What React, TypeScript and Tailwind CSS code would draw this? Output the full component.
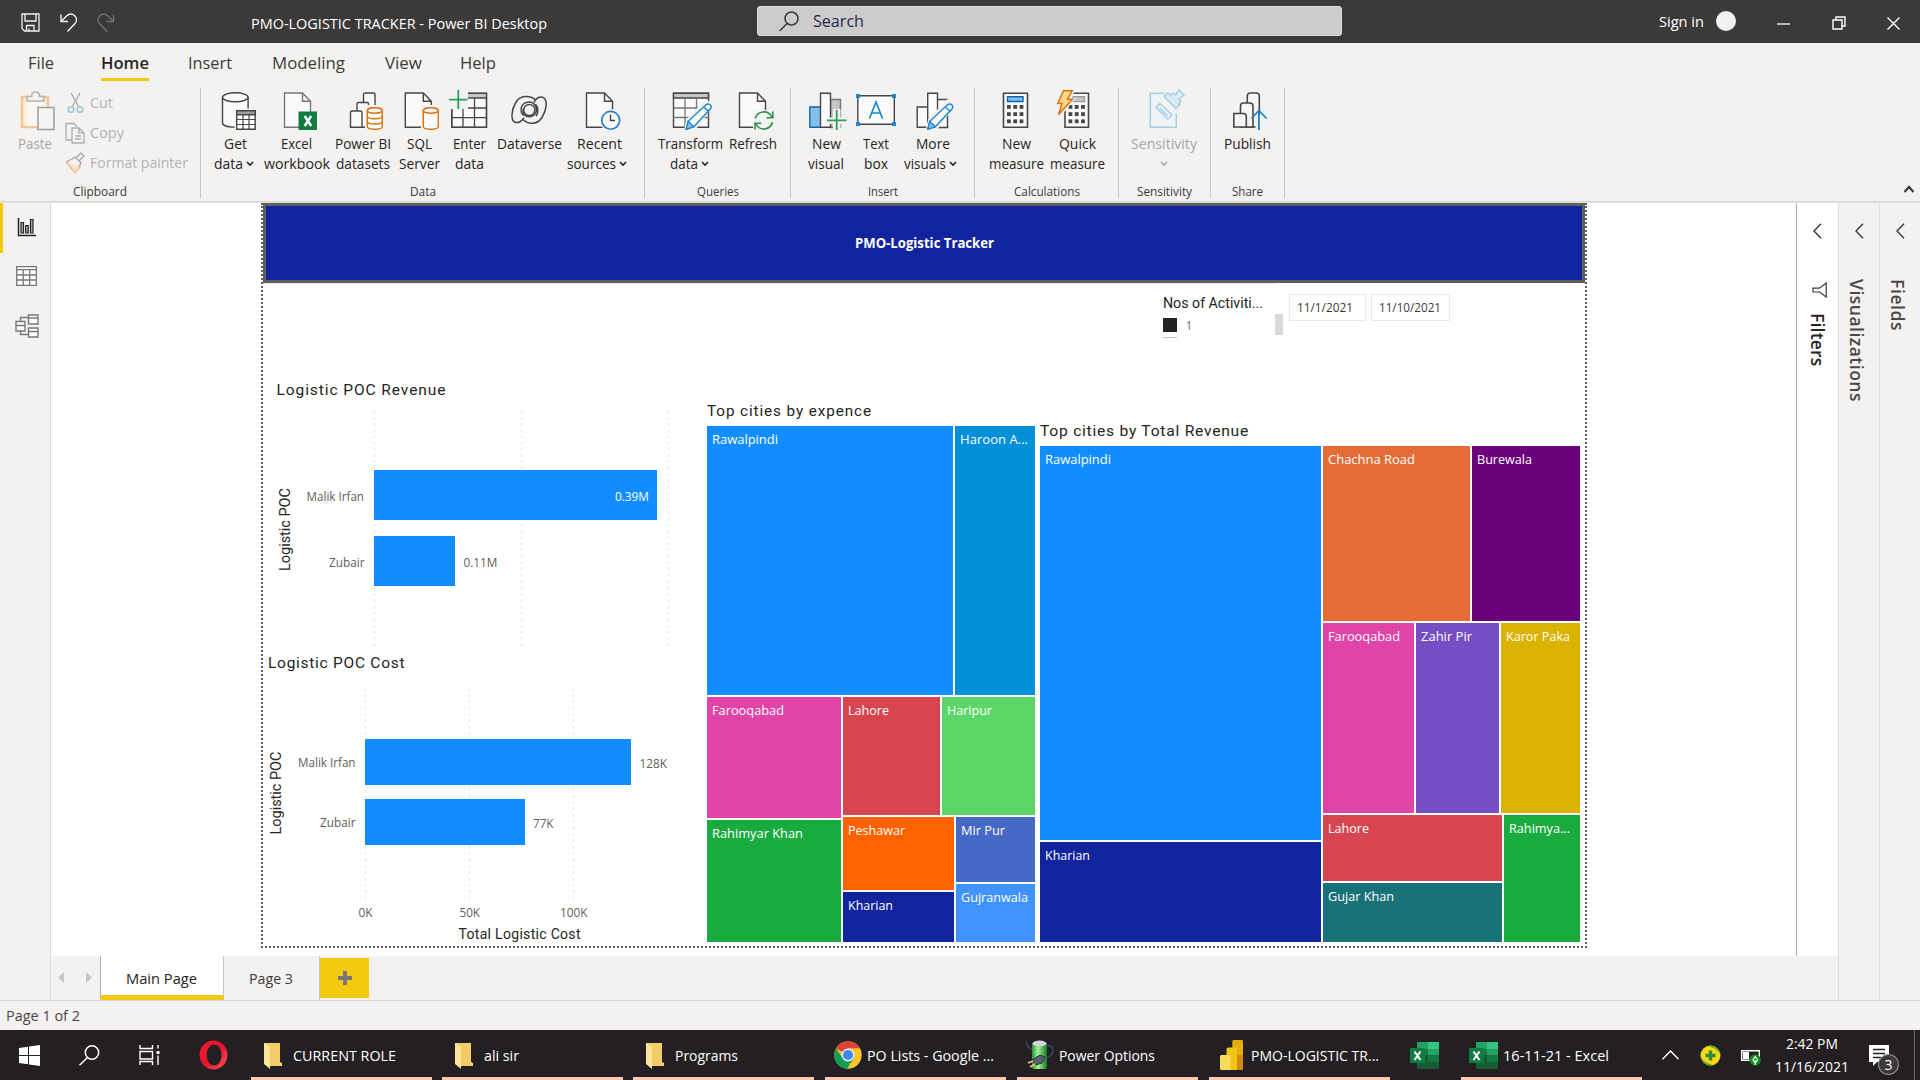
import React, { useLayoutEffect, useRef } from "react";

/** Single-line text squeezed or stretched to an exact width. */
function Fit({ w, className = "", children }: { w: number; className?: string; children: string }) {
  const ref = useRef<HTMLSpanElement>(null);
  useLayoutEffect(() => {
    const fit = () => {
      const el = ref.current;
      if (el && el.offsetWidth) el.style.transform = `scaleX(${(w / el.getBoundingClientRect().width) * currentScale(el)})`;
    };
    fit();
    document.fonts?.ready.then(fit);
  }, [w, children]);
  return (
    <span className={"block shrink-0 whitespace-nowrap " + className} style={{ width: w }}>
      <span ref={ref} className="inline-block origin-left">
        {children}
      </span>
    </span>
  );
}

function currentScale(el: HTMLElement) {
  const m = /scaleX\(([\d.]+)\)/.exec(el.style.transform);
  return m ? parseFloat(m[1]) : 1;
}

const Chev = ({ className = "" }: { className?: string }) => (
  <svg width="8" height="6" viewBox="0 0 8 6" className={className} fill="none" stroke="currentColor" strokeWidth="1.6">
    <path d="M1 1l3 3 3-3" />
  </svg>
);

const INK = "#484644";

/* ---------- ribbon icons (40 x 40) ---------- */
const Ico = ({ children }: { children: React.ReactNode }) => (
  <svg width="40" height="40" viewBox="0 0 40 40" className="shrink-0 overflow-visible" fill="none" stroke={INK} strokeWidth="1.4">
    {children}
  </svg>
);
const Doc = ({ x, c = INK }: { x: number; c?: string }) => (
  <path d={`M${x} 3h18l8 8.3v26h-26z M${x + 18} 3v8.3h8`} fill="#fafafa" stroke={c} />
);
const OrangeCyl = ({ rings = false }: { rings?: boolean }) => (
  <g stroke="#d9730d" strokeWidth="1.4">
    <path d="M22 15h20v26h-20z" fill="#f3f2f1" stroke="none" />
    <path d="M24.3 20.5v16c0 3.6 15 3.6 15 0v-16" fill="#fafafa" />
    <ellipse cx="31.8" cy="20.5" rx="7.5" ry="2.7" fill="#fafafa" />
    {rings && <path d="M24.3 26c0 3.6 15 3.6 15 0M24.3 31.3c0 3.6 15 3.6 15 0" />}
  </g>
);
const Pencil = ({ x }: { x: number }) => (
  <g transform={`translate(${x} 0)`}>
    <path d="M-2 41l3-12L20 9l8 6L12 37l-5 5z" fill="#f3f2f1" stroke="none" />
    <path d="M0.500 39.300l2-8L20.500 14.600c3-2 6 1.300 4.500 4L8 36.800z" fill="#fafafa" stroke="#1e88cf" />
    <path d="M0.500 39.300l2-8 5.500 5.500z" fill="#83beec" stroke="#1e88cf" />
    <path d="M18 17l5 4.500" stroke="#1e88cf" />
  </g>
);
const Dots = ({ x, c = INK }: { x: number; c?: string }) => (
  <g fill={c} stroke="none">
    {[15, 22.2, 29.4].map((y) =>
      [0, 6.3, 12.6].map((d) => <rect key={`${y}-${d}`} x={x + d} y={y} width="3.8" height="3.8" />)
    )}
  </g>
);

const GetData = () => (
  <Ico>
    <path d="M7.500 7v26c0 5.500 25.600 5.500 25.600 0V7" fill="#fafafa" />
    <ellipse cx="20.300" cy="7.300" rx="12.800" ry="4.500" fill="#fafafa" />
    <path d="M19.500 18.500H42V41H19.500z" fill="#f3f2f1" stroke="none" />
    <path d="M21.700 20.700h18.500v18.500H21.700z" fill="#fff" />
    <path d="M21.700 20.700h18.500v4H21.700z" fill="#a19f9d" />
    <path d="M28 24.500v15M34 24.500v15M21.700 29.500h18.500M21.700 34.500h18.500" strokeWidth="1.200" />
  </Ico>
);
const Excel = () => (
  <Ico>
    <Doc x={7.500} c="#797775" />
    <rect x="21.500" y="21.500" width="18.500" height="18.500" fill="#107c41" stroke="none" />
    <path d="M27.700 26l6.500 10M34.200 26l-6.500 10" stroke="#fff" strokeWidth="2.400" />
  </Ico>
);
const Datasets = () => (
  <Ico>
    <path d="M20.500 37.300V4.500q0-1.500 1.500-1.500h8.500q1.500 0 1.500 1.500v32.800z" fill="#fafafa" />
    <path d="M14 37.300V14q0-1.500 1.500-1.500H24q1.500 0 1.500 1.500v23.300z" fill="#fafafa" />
    <path d="M7.500 37.300V22.500q0-1.500 1.500-1.500h8.500q1.500 0 1.500 1.500v14.800z" fill="#fafafa" />
    <OrangeCyl rings />
  </Ico>
);
const Sql = () => (
  <Ico>
    <Doc x={6.300} />
    <OrangeCyl />
  </Ico>
);
const Enter = () => (
  <Ico>
    <path d="M1.800 3.300h34.700v34H1.800z" fill="#fafafa" />
    <path d="M12 3.300h24.500V8H12z" fill="#c8c6c4" stroke="none" />
    <path d="M1.800 3.300h34.700v34H1.800zM13 14v23M24.500 8v29M12 8h24M14 18h22.500M1.800 27.700h34.700" strokeWidth="1.300" />
    <path d="M-1 1h19v18H-1z" fill="#f3f2f1" stroke="none" />
    <path d="M8.300 0v19M-1 9.600h18.500" stroke="#2f9e58" strokeWidth="1.800" />
  </Ico>
);
const Dataverse = () => (
  <Ico>
    <g strokeWidth="1.500">
      <path d="M13.500 25.500c-4.300-4.500-3-13 5.500-13.500 4-.2 8 3.300 7.500 8.500-.5 4-4 6.500-7.500 6.300-4-.2-6.500-3.500-6-7.500" />
      <circle cx="19.300" cy="20" r="5.600" />
      <path d="M26 10.500C20 4.500 10 5.500 6 12 1.500 19.500.500 30 4.500 32c3.500 1.800 8-1 9.500-4.500" />
      <path d="M13 29.500c6 6 15 4.500 19-2 4.500-7.500 6-17 1.500-19.800-3.500-2-8 .5-9.500 4.800" />
      <path d="M25.500 14c3 3.500 3 9 .5 12" />
    </g>
  </Ico>
);
const Recent = () => (
  <Ico>
    <Doc x={8.500} />
    <circle cx="32.700" cy="30.300" r="11" fill="#f3f2f1" stroke="none" />
    <circle cx="32.700" cy="30.300" r="8.900" fill="#fafafa" stroke="#1e7fc2" strokeWidth="1.600" />
    <path d="M32.500 24.500v6h4.500" />
  </Ico>
);
const Transform = () => (
  <Ico>
    <path d="M3.500 3.300h35v34h-35z" fill="#fafafa" />
    <path d="M3.500 3.300h35V8h-35z" fill="#c8c6c4" />
    <path d="M15 8v29M26.500 8v29M3.500 18h35M3.500 27.500h35" stroke="#797775" strokeWidth="1.300" />
    <Pencil x={15.700} />
  </Ico>
);
const Refresh = () => (
  <Ico>
    <Doc x={6.500} />
    <path d="M20 20h22v22H20z" fill="#f3f2f1" stroke="none" />
    <g stroke="#2f8f4e" strokeWidth="1.600">
      <path d="M22.300 28.500a8.800 8.800 0 0 1 16.500-1.500M39.500 32a8.800 8.800 0 0 1-16.500 2" />
      <path d="M39.800 21.500v6.300h-6.300M22 39.500v-6.300h6.300" />
    </g>
  </Ico>
);
const NewVisual = () => (
  <Ico>
    <path d="M24.500 9.500h10v28h-10z" fill="#c8c6c4" stroke="#797775" />
    <path d="M3.800 17h11v20.300h-11z" fill="#83beec" stroke="#1166a8" />
    <path d="M14.500 3.200h10v34h-10z" fill="#fafafa" />
    <path d="M27 19h7.500v8.500H42v6.500h-7.500v6H27v-6h-5.500v-6.500H27z" fill="#f3f2f1" stroke="none" />
    <path d="M30.700 20v20M21 30.400h19.500" stroke="#2f9e58" strokeWidth="1.800" />
  </Ico>
);
const TextBox = () => (
  <Ico>
    <path d="M1.800 5.800h36.500v28.500H1.800z" fill="#fafafa" />
    <path d="M13.500 28.500L20 12l6.500 16.500M16 23h8" stroke="#1e88cf" strokeWidth="1.700" />
    <g fill="#1e88cf" stroke="none">
      <rect x="0" y="4" width="4" height="4" />
      <rect x="36" y="4" width="4" height="4" />
      <rect x="0" y="32" width="4" height="4" />
      <rect x="36" y="32" width="4" height="4" />
    </g>
  </Ico>
);
const MoreVisuals = () => (
  <Ico>
    <path d="M26.500 9.500h10v28h-10zM6.200 17h10.500v20.300H6.200zM16.700 3.200h9.800v34h-9.800z" fill="#fafafa" />
    <Pencil x={16.300} />
  </Ico>
);
const NewMeasure = () => (
  <Ico>
    <path d="M7.500 3.200h24v34h-24z" fill="#fafafa" strokeWidth="1.600" />
    <path d="M11.500 6.800h15.500v4.700H11.500z" fill="#83beec" stroke="#1166a8" />
    <Dots x={11} />
  </Ico>
);
const QuickMeasure = () => (
  <Ico>
    <path d="M8 3.200h23.500v34H8z" fill="#fafafa" strokeWidth="1.600" />
    <path d="M15 6.800h12.500v4.700H15z" fill="#c8c6c4" stroke="#a19f9d" />
    <Dots x={11.500} />
    <path d="M4 -1h14l-3 9h4L3 27l-5-1z" fill="#f3f2f1" stroke="none" />
    <path d="M6.500 .7h8.700l-4.700 8.500h5L1.500 24.500l3.500-11H.8z" fill="#ffd88c" stroke="#d9730d" strokeWidth="1.500" />
  </Ico>
);
const Sensitivity = () => (
  <Ico>
    <g stroke="#a5cde6" strokeWidth="1.500">
      <path d="M6.300 3.300h26v34h-26z" fill="#f0f3f5" />
      <path d="M12 17.500l4-4 12 11.500-4 4zM15.500 18l8 7.500" />
      <path d="M17 7l8-8h15l4 8-12 17z" fill="#f3f2f1" stroke="none" />
      <path d="M20 5.500l3.800-3.800 12 12L32 17.500z" fill="#dcebf4" transform="translate(0 1)" />
      <path d="M26 5.500l3-2.500 2.500 2 3.500-5 5 5-5 4 2 2.500-2.500 3" fill="#dcebf4" />
    </g>
  </Ico>
);
const Publish = () => (
  <Ico>
    <g strokeWidth="1.600">
      <path d="M20.300 37V6q0-3 3-3h6q3 0 3 3v31z" fill="#f6f5f4" />
      <path d="M13.500 37V16q0-3 3-3h6.500q3 0 3 3v21z" fill="#f6f5f4" />
      <path d="M6.800 37V23.500h9.500q3 0 3 3V37z" fill="#f6f5f4" />
      <path d="M28.500 25h7v16h-7z" fill="#f3f2f1" stroke="none" />
      <path d="M31.900 40V20.500M24.500 28.500l7.400-8 7.600 8" stroke="#1e7fc2" strokeWidth="1.800" />
    </g>
  </Ico>
);

/* ---------- ribbon ---------- */
type Line = [string, number];
function Item({ w, icon, a, ax = "", b, bx = "", chev, chevOnly, dim }: { w: string; icon: React.ReactNode; a: Line; ax?: string; b?: Line; bx?: string; chev?: boolean; chevOnly?: boolean; dim?: boolean }) {
  return (
    <div className={`flex h-[86px] shrink-0 flex-col items-center text-[14.500px] leading-5 ${w} ${dim ? "text-[#a8a6a4]" : "text-[#252423]"}`}>
      {icon}
      <div className={"mt-1 " + ax}>
        <Fit w={a[1]}>{a[0]}</Fit>
      </div>
      {b && (
        <div className={"flex items-center gap-[3px] " + bx}>
          <Fit w={b[1]}>{b[0]}</Fit>
          {chev && <Chev />}
        </div>
      )}
      {chevOnly && <Chev className="mt-[7px]" />}
    </div>
  );
}
function Group({ w, label, lw, children }: { w: string; label: string; lw: number; children: React.ReactNode }) {
  return (
    <div className={`flex h-[110px] shrink-0 flex-col border-r border-[#c8c6c4] ${w}`}>
      <div className="flex h-[95px] pt-[2px]">{children}</div>
      <div className="flex h-[15px] justify-center text-[12.500px] leading-[17px] text-[#3b3a39]">
        <Fit w={lw}>{label}</Fit>
      </div>
    </div>
  );
}

function Ribbon() {
  return (
    <div className="h-[158px] bg-[#f3f2f1]">
      <nav className="flex h-[45px] text-[17px] leading-[39px] text-[#3b3a39]">
        <Fit w={26} className="ml-[28px]">File</Fit>
        <div className="ml-[47px] h-[38px] w-[48px] border-b-[3px] border-[#f2c811] font-semibold text-[#252423]">
          <Fit w={48}>Home</Fit>
        </div>
        <Fit w={44} className="ml-[39px]">Insert</Fit>
        <Fit w={73} className="ml-[40px]">Modeling</Fit>
        <Fit w={37} className="ml-[40px]">View</Fit>
        <Fit w={36} className="ml-[38px]">Help</Fit>
      </nav>
      <div className="flex">
        <Group w="w-[201px]" label="Clipboard" lw={54}>
          <div className="ml-[15px] w-[40px] text-[14.500px] leading-5 text-[#a8a6a4]">
            <Ico>
              <g strokeWidth="1.500">
                <path d="M7 7h26v30H7z" fill="#fdeed6" stroke="#eec89a" strokeWidth="2.500" />
                <path d="M12 12h17v24H12z" fill="#f8f7f6" stroke="none" />
                <path d="M12 11V6.500h4.500c0-6 8-6 8 0H29V11z" fill="#f3f2f1" stroke="#b5b3b1" />
                <path d="M23 17.500h16v22H23z" fill="#f6f5f4" stroke="#a19f9d" />
              </g>
            </Ico>
            <div className="mt-1 pl-[3px]">
              <Fit w={34}>Paste</Fit>
            </div>
          </div>
          <div className="ml-[10px] flex flex-col text-[14.500px] leading-[30px] text-[#b5b3b1]">
            <div className="-mt-[2px] flex h-[30px] items-center gap-[5px]">
              <svg width="20" height="22" viewBox="0 0 20 22" className="translate-x-px" fill="none" stroke="#a8a6a4" strokeWidth="1.300">
                <path d="M5 1l8 14M14 1L6 15" />
                <circle cx="5" cy="17.500" r="2.800" stroke="#9cc3de" strokeWidth="1.500" />
                <circle cx="14" cy="17.500" r="2.800" stroke="#9cc3de" strokeWidth="1.500" />
              </svg>
              <Fit w={23}>Cut</Fit>
            </div>
            <div className="flex h-[30px] items-center gap-[5px]">
              <svg width="20" height="22" viewBox="0 0 20 22" fill="none" stroke="#b0aeac" strokeWidth="1.300">
                <path d="M7 18H1V1.500h8l3 3" />
                <path d="M7 6h7l5 5v10H7zM14 6v5h5M10 14h6M10 17h6" />
              </svg>
              <Fit w={34}>Copy</Fit>
            </div>
            <div className="flex h-[30px] items-center gap-[5px]">
              <svg width="20" height="22" viewBox="0 0 20 22" fill="none" strokeWidth="1.300">
                <path d="M2 11l7-2 6 6-5 6z" fill="#fae3c5" stroke="#e9bd8d" />
                <path d="M1 10l6-3 3-2 6 6-2 4M11 6l5-5 3 3-5 5" fill="#f3f2f1" stroke="#a8a6a4" />
              </svg>
              <Fit w={98}>Format painter</Fit>
            </div>
          </div>
        </Group>
        <Group w="w-[444px]" label="Data" lw={26}>
          <Item w="ml-[11px] w-[46px]" icon={<GetData />} a={["Get", 23]} b={["data", 29]} bx="-ml-[2px]" chev />
          <Item w="w-[78px]" icon={<Excel />} a={["Excel", 31]} ax="-ml-[2px]" b={["workbook", 66]} />
          <Item w="w-[54px]" icon={<Datasets />} a={["Power BI", 56]} b={["datasets", 54]} />
          <Item w="w-[58px]" icon={<Sql />} a={["SQL", 25]} b={["Server", 41]} />
          <Item w="w-[44px]" icon={<Enter />} a={["Enter", 33]} ax="-ml-[2px]" b={["data", 29]} bx="-ml-[2px]" />
          <Item w="w-[76px]" icon={<Dataverse />} a={["Dataverse", 65]} ax="-ml-px" />
          <Item w="w-[60px]" icon={<Recent />} a={["Recent", 45]} ax="ml-[2px]" b={["sources", 49]} bx="-ml-[3px]" chev />
        </Group>
        <Group w="w-[146px]" label="Queries" lw={42}>
          <Item w="ml-[11px] w-[68px]" icon={<Transform />} a={["Transform", 65]} b={["data", 28]} bx="-ml-[2px]" chev />
          <Item w="w-[58px]" icon={<Refresh />} a={["Refresh", 48]} />
        </Group>
        <Group w="w-[184px]" label="Insert" lw={30}>
          <Item w="ml-[13px] w-[44px]" icon={<NewVisual />} a={["New", 29]} b={["visual", 36]} />
          <Item w="w-[56px]" icon={<TextBox />} a={["Text", 26]} b={["box", 24]} />
          <Item w="w-[54px]" icon={<MoreVisuals />} a={["More", 34]} ax="ml-[4px]" b={["visuals", 42]} bx="-ml-px" chev />
        </Group>
        <Group w="w-[144px]" label="Calculations" lw={66}>
          <Item w="ml-[13px] w-[56px]" icon={<NewMeasure />} a={["New", 29]} b={["measure", 55]} />
          <Item w="ml-[4px] w-[58px]" icon={<QuickMeasure />} a={["Quick", 37]} b={["measure", 55]} />
        </Group>
        <Group w="w-[92px]" label="Sensitivity" lw={55}>
          <Item w="ml-[11px] w-[68px]" icon={<Sensitivity />} a={["Sensitivity", 66]} chevOnly dim />
        </Group>
        <Group w="w-[74px]" label="Share" lw={31}>
          <Item w="ml-[11px] w-[50px]" icon={<Publish />} a={["Publish", 47]} />
        </Group>
        <svg width="12" height="8" viewBox="0 0 12 8" className="mt-[97px] mr-[5px] ml-auto" fill="none" stroke="#3b3a39" strokeWidth="2.200">
          <path d="M1.500 7L6 2l4.500 5" />
        </svg>
      </div>
    </div>
  );
}

function TitleBar() {
  return (
    <header className="flex h-[43px] shrink-0 items-start bg-[#3b3a39] text-white">
      <svg width="19" height="19" viewBox="0 0 19 19" className="mt-[13px] ml-[21px]" fill="none" stroke="#f3f2f1" strokeWidth="1.300">
        <path d="M1 1h17v17H3.500L1 15.500zM4 1v7h11V1M5.500 18v-5.500h7.500V18M8 15.500V18" />
      </svg>
      <svg width="18" height="19" viewBox="0 0 18 19" className="mt-[13px] ml-[20px]" fill="none" stroke="#f3f2f1" strokeWidth="1.400">
        <path d="M1 1.500v7h7M1.500 8l5-5c6-5 13 2 8.500 7.500L7.500 18.500" />
      </svg>
      <svg width="18" height="19" viewBox="0 0 18 19" className="mt-[13px] ml-[19px]" fill="none" stroke="#74726f" strokeWidth="1.300">
        <path d="M16.500 1.500v7h-7M16 8l-5-5C5 -2 -2 5 2.500 10.500L10 18.500" />
      </svg>
      <Fit w={296} className="ml-[136px] text-[14.500px] leading-[47px]">PMO-LOGISTIC TRACKER - Power BI Desktop</Fit>
      <div className="mt-[6px] ml-[210px] flex h-[30px] w-[585px] items-center rounded-[3px] border border-[#dddcdb] bg-[#cdccca] pl-[21px]">
        <svg width="20" height="21" viewBox="0 0 20 21" fill="none" stroke="#3b3a39" strokeWidth="1.500">
          <circle cx="12.500" cy="7.500" r="6.500" />
          <path d="M8 12.500L.7 20" />
        </svg>
        <Fit w={51} className="ml-[14px] text-[16.500px] leading-7 text-[#1f2a4d]">Search</Fit>
      </div>
      <Fit w={45} className="ml-[317px] text-[14.500px] leading-[43px]">Sign in</Fit>
      <div className="mt-[11px] ml-[12px] size-[20px] rounded-full bg-[#f3f2f1]" />
      <svg width="13" height="2" className="mt-[23px] ml-[41px]">
        <path d="M0 1h13" stroke="#fff" strokeWidth="1.300" />
      </svg>
      <svg width="14" height="14" viewBox="0 0 14 14" className="mt-[16px] ml-[42px]" fill="none" stroke="#fff" strokeWidth="1.400">
        <path d="M1 4h9v9H1zM4 4V1h9v9h-3" />
      </svg>
      <svg width="13" height="13" viewBox="0 0 13 13" className="mt-[17px] ml-[41px]" fill="none" stroke="#fff" strokeWidth="1.400">
        <path d="M.5 .5l12 12M12.500 .5l-12 12" />
      </svg>
    </header>
  );
}

function ViewBar() {
  return (
    <aside className="flex w-[51px] shrink-0 flex-col border-r border-[#dcdbda] bg-[#f3f2f1]">
      <div className="h-[50px] border-l-[3px] border-[#f2c811] pt-[15px] pl-[14px]">
        <svg width="19" height="19" viewBox="0 0 19 19" fill="#b3b1af" stroke="#252423" strokeWidth="1.200">
          <path d="M1.500 0v17.500H19" fill="none" strokeWidth="1.500" />
          <path d="M4 4.500h2.500v10.500H4zM8.700 7.500h2.500V15H8.700zM13.500 1.500H16V15h-2.500z" />
        </svg>
      </div>
      <svg width="21" height="20" viewBox="0 0 21 20" className="mt-[13px] ml-[16px]" fill="#fff" stroke="#797775" strokeWidth="1.300">
        <path d="M.7 .7h19.600v18.600H.7zM.7 3.700h19.600M7.200 3.700v15.600M13.700 3.700v15.600M.7 9h19.600M.7 14h19.600" />
      </svg>
      <svg width="24" height="24" viewBox="0 0 24 24" className="mt-[28px] ml-[15px]" fill="#fff" stroke="#797775" strokeWidth="1.400">
        <path d="M5.500 7V3.500H14M5.500 17v3.500H14" fill="none" />
        <path d="M1 7.500h9V17H1zM1 11.500h9M13.500 1H23v9h-9.500zM13.500 4H23M13.500 14H23v9h-9.500zM13.500 17.500H23" />
      </svg>
    </aside>
  );
}

function ChartText({ x, y, w, s = 12.5, fill = "#605e5c", spaced, children, rotate }: { x: number; y: number; w: number; s?: number; fill?: string; spaced?: boolean; children: string; rotate?: boolean }) {
  return (
    <text x={rotate ? 0 : x} y={rotate ? 0 : y} fontSize={s} fill={fill} textLength={w} lengthAdjust={spaced ? "spacing" : "spacingAndGlyphs"} transform={rotate ? `translate(${x} ${y}) rotate(-90)` : undefined}>
      {children}
    </text>
  );
}
const DIN = "Roboto, sans-serif";

/* Both chart viewBoxes use window coordinates. */
function RevenueChart() {
  return (
    <svg width="415" height="290" viewBox="267 375 415 290" className="absolute top-[172px] left-[4px]">
      {[374.5, 521.5, 668.5].map((x) => (
        <path key={x} d={`M${x} 411V648`} stroke="#d6d6d6" strokeWidth="1.200" strokeDasharray="1.300 5" />
      ))}
      <rect x="374" y="470" width="283" height="50" fill="#118dff" />
      <rect x="374" y="536" width="81" height="50" fill="#118dff" />
      <g fontFamily={DIN}>
        <ChartText x={276.500} y={395} w={169} s={15.500} fill="#252423" spaced>Logistic POC Revenue</ChartText>
        <ChartText x={290} y={571} w={83} s={14.500} fill="#252423" spaced rotate>Logistic POC</ChartText>
      </g>
      <ChartText x={306.500} y={501} w={57.500}>Malik Irfan</ChartText>
      <ChartText x={329} y={566.500} w={35.500}>Zubair</ChartText>
      <ChartText x={615} y={501} w={34} fill="#fff">0.39M</ChartText>
      <ChartText x={463.500} y={567} w={34}>0.11M</ChartText>
    </svg>
  );
}
function CostChart() {
  return (
    <svg width="430" height="295" viewBox="267 649 430 295" className="absolute top-[446px] left-[4px]">
      {[365.5, 469.5, 573.5].map((x) => (
        <path key={x} d={`M${x} 689V902`} stroke="#d6d6d6" strokeWidth="1.200" strokeDasharray="1.300 5" />
      ))}
      <rect x="365" y="739" width="266" height="46" fill="#118dff" />
      <rect x="365" y="799" width="160" height="46" fill="#118dff" />
      <g fontFamily={DIN}>
        <ChartText x={268} y={668} w={136.500} s={15.500} fill="#252423" spaced>Logistic POC Cost</ChartText>
        <ChartText x={281} y={834.500} w={83} s={14.500} fill="#252423" spaced rotate>Logistic POC</ChartText>
        <ChartText x={458.500} y={938.500} w={122} s={14} fill="#252423" spaced>Total Logistic Cost</ChartText>
      </g>
      <ChartText x={298} y={767} w={57.500}>Malik Irfan</ChartText>
      <ChartText x={320} y={827} w={35.500}>Zubair</ChartText>
      <ChartText x={639.500} y={767.500} w={27.500}>128K</ChartText>
      <ChartText x={533} y={828} w={20.500}>77K</ChartText>
      <ChartText x={358.500} y={917} w={14}>0K</ChartText>
      <ChartText x={459.500} y={917} w={20.500}>50K</ChartText>
      <ChartText x={560} y={917} w={27.500}>100K</ChartText>
    </svg>
  );
}

function Tile({ className, w, children }: { className: string; w: number; children: string }) {
  return (
    <div className={"overflow-hidden pt-[4px] pl-[5px] text-[13px] leading-[18px] text-white " + className}>
      <Fit w={w}>{children}</Fit>
    </div>
  );
}

function ExpenseTreemap() {
  return (
    <section className="absolute top-[198px] left-[444px] w-[328px]">
      <Fit w={165} className="h-[25px] font-['Roboto'] text-[15px] leading-[21px] tracking-[0.900px] text-[#252423]">Top cities by expence</Fit>
      <div className="flex h-[516px] flex-col gap-[2px]">
        <div className="flex h-[269px] shrink-0 gap-[2px]">
          <Tile className="w-[246px] bg-[#118dff]" w={66}>Rawalpindi</Tile>
          <Tile className="flex-1 bg-[#0090d9]" w={68}>Haroon A...</Tile>
        </div>
        <div className="flex flex-1 gap-[2px]">
          <div className="flex w-[134px] flex-col gap-[2px]">
            <Tile className="h-[121px] bg-[#e044a7]" w={72}>Farooqabad</Tile>
            <Tile className="flex-1 bg-[#1aab40]" w={91}>Rahimyar Khan</Tile>
          </div>
          <div className="flex flex-1 flex-col gap-[2px]">
            <div className="flex h-[118px] gap-[2px]">
              <Tile className="w-[97px] bg-[#d64550]" w={41}>Lahore</Tile>
              <Tile className="flex-1 bg-[#5cd667]" w={45}>Haripur</Tile>
            </div>
            <div className="flex flex-1 gap-[2px]">
              <div className="flex w-[111px] flex-col gap-[2px]">
                <Tile className="h-[73px] bg-[#ff6200]" w={57}>Peshawar</Tile>
                <Tile className="flex-1 bg-[#12239e]" w={45}>Kharian</Tile>
              </div>
              <div className="flex flex-1 flex-col gap-[2px]">
                <Tile className="h-[65px] bg-[#4668c5]" w={44}>Mir Pur</Tile>
                <Tile className="flex-1 bg-[#4092ff]" w={67}>Gujranwala</Tile>
              </div>
            </div>
          </div>
        </div>
      </div>
    </section>
  );
}

function RevenueTreemap() {
  return (
    <section className="absolute top-[218px] left-[777px] w-[540px]">
      <Fit w={209} className="h-[25px] font-['Roboto'] text-[15px] leading-[21px] tracking-[0.700px] text-[#252423]">Top cities by Total Revenue</Fit>
      <div className="flex h-[496px] gap-[2px]">
        <div className="flex w-[281px] flex-col gap-[2px]">
          <Tile className="h-[394px] bg-[#118dff]" w={66}>Rawalpindi</Tile>
          <Tile className="flex-1 bg-[#12239e]" w={45}>Kharian</Tile>
        </div>
        <div className="flex flex-1 flex-col gap-[2px]">
          <div className="flex h-[175px] gap-[2px]">
            <Tile className="w-[147px] bg-[#e66c37]" w={87}>Chachna Road</Tile>
            <Tile className="flex-1 bg-[#6b007b]" w={55}>Burewala</Tile>
          </div>
          <div className="flex h-[190px] gap-[2px]">
            <Tile className="w-[91px] bg-[#e044a7]" w={72}>Farooqabad</Tile>
            <Tile className="w-[83px] bg-[#744ec2]" w={51}>Zahir Pir</Tile>
            <Tile className="flex-1 bg-[#d9b300]" w={64}>Karor Paka</Tile>
          </div>
          <div className="flex flex-1 gap-[2px]">
            <div className="flex w-[179px] flex-col gap-[2px]">
              <Tile className="h-[66px] bg-[#d64550]" w={41}>Lahore</Tile>
              <Tile className="flex-1 bg-[#197278]" w={66}>Gujar Khan</Tile>
            </div>
            <Tile className="flex-1 bg-[#1aab40]" w={61}>Rahimya...</Tile>
          </div>
        </div>
      </div>
    </section>
  );
}

/* Report page: visuals are placed freely on it. */
function ReportPage() {
  return (
    <div className="relative ml-[210px] h-[745px] w-[1326px] border-2 border-t-0 border-dotted border-[#5f5e5d] bg-white">
      <div className="absolute top-0 left-0 flex h-[80px] w-[1322px] items-center justify-center border-[3px] border-[#605e5c] bg-[#12239e] text-[13.500px] font-bold text-white">
        <Fit w={139}>PMO-Logistic Tracker</Fit>
      </div>
      <div className="absolute top-[80px] left-0 h-px w-[1012px] bg-[#e3e3e3]" />
      <div className="absolute top-[91px] left-[900px] flex h-[45px] w-[120px] justify-between">
        <div>
          <Fit w={100} className="font-['Roboto'] text-[14px] leading-[18px] text-[#252423]">Nos of Activiti...</Fit>
          <div className="mt-[4px] flex h-[17px] items-center">
            <div className="size-[14px] bg-[#252423]" />
            <Fit w={6} className="ml-[9px] text-[13.500px] leading-[16px] text-[#605e5c]">1</Fit>
          </div>
          <div className="mt-[4px] h-px w-[14px] bg-[#c8c6c4]" />
        </div>
        <div className="mt-[20px] h-[21px] w-[8px] bg-[#d9d9d9]" />
      </div>
      <div className="absolute top-[91px] left-[1026px] flex gap-[5px] text-[12.500px] leading-[25px] text-[#3b3a39]">
        <div className="h-[27px] w-[77px] border border-[#eaeaea] pl-[7px]">
          <Fit w={56}>11/1/2021</Fit>
        </div>
        <div className="h-[27px] w-[79px] border border-[#eaeaea] pl-[7px]">
          <Fit w={62}>11/10/2021</Fit>
        </div>
      </div>
      <RevenueChart />
      <CostChart />
      <ExpenseTreemap />
      <RevenueTreemap />
    </div>
  );
}

const PaneChevron = () => (
  <svg width="9" height="16" viewBox="0 0 9 16" fill="none" stroke="#3b3a39" strokeWidth="1.400" className="shrink-0">
    <path d="M8 .8L1 8l7 7.200" />
  </svg>
);

function PageTabs() {
  return (
    <div className="flex h-[44px] shrink-0 bg-[#f3f2f1] text-[14.500px] leading-[46px] text-[#3b3a39]">
      <div className="flex w-[49px] gap-[22px] pt-[16px] pl-[7px]">
        <svg width="6" height="11"><path d="M6 0v11L0 5.500z" fill="#c8c6c4" /></svg>
        <svg width="6" height="11"><path d="M0 0v11l6-5.500z" fill="#c8c6c4" /></svg>
      </div>
      <div className="flex w-[124px] justify-center border-r border-b-[5px] border-l border-r-[#c8c6c4] border-b-[#f2c811] border-l-[#b3b0ad] bg-white pr-px font-medium text-[#252423]">
        <Fit w={71}>Main Page</Fit>
      </div>
      <div className="flex w-[96px] justify-center border-r border-[#c8c6c4] pr-px">
        <Fit w={44}>Page 3</Fit>
      </div>
      <div className="mt-[2px] flex h-[40px] w-[49px] items-center justify-center bg-[#f2c811]">
        <svg width="14" height="14"><path d="M5 0h4v5h5v4H9v5H5V9H0V5h5z" fill="#797775" /></svg>
      </div>
    </div>
  );
}

function Panes() {
  return (
    <>
      <div className="flex w-[41px] shrink-0 flex-col items-center border-r border-[#e1dfdd] bg-[#f3f2f1] pt-[20px]">
        <PaneChevron />
        <Fit w={20} className="mt-[40px] mr-[5px] h-[125px] text-[17.500px] leading-5 font-semibold tracking-[0.500px] text-[#494847] [writing-mode:vertical-rl]">Visualizations</Fit>
      </div>
      <div className="flex w-[40px] shrink-0 flex-col items-center bg-[#f3f2f1] pt-[20px]">
        <PaneChevron />
        <Fit w={20} className="mt-[40px] mr-[5px] h-[54px] text-[17.500px] leading-5 font-semibold tracking-[0.600px] text-[#494847] [writing-mode:vertical-rl]">Fields</Fit>
      </div>
    </>
  );
}

/* ---------- taskbar ---------- */
const Folder = () => (
  <svg width="19" height="26" viewBox="0 0 19 26" className="mt-[13px]">
    <path d="M0 0h16v19l2 1v3H5L0 19z" fill="#f6d272" />
    <path d="M3 1h13v22H5z" fill="#f2cc66" />
    <path d="M0 0l6 4v22l-6-5z" fill="#fde49a" />
  </svg>
);
const XlIcon = () => (
  <svg width="29" height="28" viewBox="0 0 29 28" className="mt-[11px]">
    <path d="M7 1h11v7H7z" fill="#21a366" />
    <path d="M18 1h11v7H18z" fill="#33c481" />
    <path d="M7 8h11v6.500H7z" fill="#107c41" />
    <path d="M18 8h11v6.500H18z" fill="#21a366" />
    <path d="M7 14.500h11V21H7z" fill="#185c37" />
    <path d="M18 14.500h11V21H18z" fill="#107c41" />
    <path d="M7 21h22v7H7z" fill="#185c37" />
    <path d="M0 7h15v15H0z" fill="#107c41" />
    <path d="M4.500 10.500l6 8.500M10.500 10.500l-6 8.500" stroke="#fff" strokeWidth="2.100" />
  </svg>
);
const Chrome = () => (
  <svg width="28" height="28" viewBox="0 0 28 28" className="mt-[11px]">
    <circle cx="14" cy="14" r="13.700" fill="#fbc52d" />
    <path d="M14 14L2.100 7.200A13.700 13.700 0 0 1 25.900 7.200H14z" fill="#db4437" />
    <path d="M2.100 7.200A13.700 13.700 0 0 0 13 27.700L19.500 17.500 14 14 8.500 17z" fill="#0f9d58" />
    <circle cx="14" cy="14" r="6.400" fill="#f1f1f1" />
    <circle cx="14" cy="14" r="5.100" fill="#4285f4" />
  </svg>
);
const Battery = () => (
  <svg width="28" height="30" viewBox="0 0 28 30" className="mt-[10px]">
    <defs>
      <linearGradient id="cell" x1="0" x2="1">
        <stop offset="0" stopColor="#1c9a2c" />
        <stop offset=".4" stopColor="#a6f29a" />
        <stop offset="1" stopColor="#0f7d1e" />
      </linearGradient>
    </defs>
    <path d="M0 1c1 6 3 8 8 9M20 6c8-2 8 6 5 9-3 3-6 3-9 6" stroke="#37415f" strokeWidth="1.800" fill="none" />
    <rect x="6" y="3" width="15" height="26" rx="2" fill="url(#cell)" />
    <ellipse cx="13.500" cy="3.500" rx="7" ry="3" fill="#cfd8dc" />
    <path d="M6 20l8-5 5 2-3 6-7 2z" fill="#5b6270" stroke="#2b3040" />
    <path d="M2 23l5-2M4 27l5-3" stroke="#e8c98a" strokeWidth="1.600" />
  </svg>
);
const PbiLogo = () => (
  <svg width="23" height="30" viewBox="0 0 23 30" className="mt-[10px]">
    <path d="M12.500 1.500Q12.500 0 14 0h7.500Q23 0 23 1.500v27Q23 30 21.500 30h-9z" fill="#d68a0c" />
    <path d="M12.500 1.500Q12.500 0 14 0h7.500Q23 0 23 1.500V15H12.500z" fill="#e6ad10" />
    <path d="M6.500 9Q6.500 7.500 8 7.500h7.500Q17 7.500 17 9v21H6.500z" fill="#f0c419" />
    <path d="M0 16.500Q0 15 1.500 15H9q1.500 0 1.500 1.500V30h-9Q0 30 0 28.500z" fill="#f7dc5a" />
  </svg>
);

function Task({ className, icon, gap, w, children }: { className: string; icon: React.ReactNode; gap: string; w: number; children: string }) {
  return (
    <div className={"flex h-[50px] w-[181px] shrink-0 items-start border-b-[3px] border-[#fbc7af] text-[14.500px] leading-[51px] text-white " + className}>
      {icon}
      <Fit w={w} className={gap}>{children}</Fit>
    </div>
  );
}

function Taskbar() {
  return (
    <footer className="flex h-[50px] shrink-0 items-start bg-[#241f22] text-white">
      <svg width="21" height="21" viewBox="0 0 21 21" className="mt-[15px] ml-[19px]" fill="#fff">
        <path d="M0 3l9-1.300V10H0zM10 1.500L21 0v10H10zM0 11h9v8.300L0 18zM10 11h11v10l-11-1.500z" />
      </svg>
      <svg width="21" height="21" viewBox="0 0 21 21" className="mt-[15px] ml-[39px]" fill="none" stroke="#fff" strokeWidth="1.500">
        <circle cx="13" cy="7.500" r="6.700" />
        <path d="M8.500 12.500L.5 20.300" />
      </svg>
      <svg width="21" height="20" viewBox="0 0 21 20" className="mt-[15px] ml-[39px]" fill="none" stroke="#fff" strokeWidth="1.400">
        <path d="M1 0v3.500h12.500V0M1 6.500h12.500v7.500H1zM1 20v-3.500h12.500V20M19 0v3.500M19 10.500V20" />
        <path d="M17.500 6h3v3h-3z" fill="#fff" stroke="none" />
      </svg>
      <svg width="29" height="30" viewBox="0 0 29 30" className="mt-[10px] ml-[39px]">
        <defs>
          <linearGradient id="op" x1="0" x2="1" y1="0" y2="1">
            <stop offset="0" stopColor="#ff1b2d" />
            <stop offset=".5" stopColor="#e0142a" />
            <stop offset="1" stopColor="#ff5a5a" />
          </linearGradient>
        </defs>
        <path fillRule="evenodd" fill="url(#op)" d="M14.500 .5a14 14.500 0 1 0 .01 0zM15 4.500c4.500 0 7.500 5 7.500 10.500S19.500 25.500 15 25.500 7.800 20.500 7.800 15 10.500 4.500 15 4.500z" />
      </svg>
      <Task className="ml-[23px] pl-[13px]" icon={<Folder />} gap="ml-[10px]" w={103}>CURRENT ROLE</Task>
      <Task className="ml-[10px] pl-[13px]" icon={<Folder />} gap="ml-[10px]" w={35}>ali sir</Task>
      <Task className="ml-[10px] pl-[13px]" icon={<Folder />} gap="ml-[10px]" w={63}>Programs</Task>
      <Task className="ml-[11px] pl-[9px]" icon={<Chrome />} gap="ml-[5px]" w={127}>PO Lists - Google ...</Task>
      <Task className="ml-[11px] pl-[9px]" icon={<Battery />} gap="ml-[5px]" w={96}>Power Options</Task>
      <Task className="ml-[11px] pl-[11px]" icon={<PbiLogo />} gap="ml-[8px]" w={128}>PMO-LOGISTIC TR...</Task>
      <div className="ml-[20px]"><XlIcon /></div>
      <Task className="ml-[22px] pl-[8px]" icon={<XlIcon />} gap="ml-[5px]" w={106}>16-11-21 - Excel</Task>
      <svg width="17" height="10" viewBox="0 0 17 10" className="mt-[20px] ml-[20px]" fill="none" stroke="#fff" strokeWidth="1.400">
        <path d="M.5 9.300l8-8.300 8 8.300" />
      </svg>
      <svg width="21" height="21" viewBox="0 0 21 21" className="mt-[15px] ml-[21px]">
        <circle cx="10.500" cy="10.500" r="10" fill="#f7d716" />
        <path d="M7 1a10 10 0 0 1 13 8c-3-5-7-7-13-8zM14 20A10 10 0 0 1 1 12c3 5 7 7 13 8z" fill="#4fae32" />
        <path d="M8.800 5.500h3.400v3.300h3.300v3.400h-3.300v3.300H8.800v-3.300H5.500V8.800h3.300z" fill="#2e8b2e" />
      </svg>
      <svg width="20" height="17" viewBox="0 0 20 17" className="mt-[19px] ml-[20px]">
        <path d="M.7 1.700h17.600v9.600H.7z" fill="none" stroke="#fff" strokeWidth="1.400" />
        <path d="M2 3h6v7H2z" fill="#fff" />
        <circle cx="14.200" cy="11" r="5.700" fill="#0d8a1c" />
        <path d="M14.200 7.500l2.300 3.500-2.300 3.300-2.300-3.300zM14.200 11v5" fill="none" stroke="#fff" strokeWidth="1.100" />
      </svg>
      <div className="mt-[2px] ml-[14px] flex w-[74px] flex-col items-center text-[14.500px] leading-[23px]">
        <Fit w={52}>2:42 PM</Fit>
        <Fit w={74}>11/16/2021</Fit>
      </div>
      <svg width="31" height="31" viewBox="0 0 31 31" className="mt-[14px] ml-[20px]">
        <path d="M0 1h20v17H8l-4 4v-4H0z" fill="#fff" />
        <path d="M4 5.500h12M4 9.500h12M4 13.500h8" stroke="#241f22" strokeWidth="1.300" />
        <circle cx="19.500" cy="20.500" r="10" fill="#3c393b" stroke="#8d8a8c" strokeWidth="1.200" />
        <text x="19.500" y="25.500" fontSize="14" textAnchor="middle" fill="#fff">3</text>
      </svg>
      <div className="ml-auto h-[50px] w-[6px] border-l border-[#6b686a]" />
    </footer>
  );
}

export default function App() {
  return (
    <div className="flex h-[1080px] w-[1920px] flex-col overflow-hidden bg-white font-['Open_Sans','Noto_Sans',sans-serif]">
      <TitleBar />
      <Ribbon />
      <div className="h-[2px] shrink-0 bg-linear-to-b from-[#d2d0ce] to-[#e8e7e6]" />
      <div className="flex h-[797px] shrink-0">
        <ViewBar />
        <div className="flex flex-1 flex-col">
          <div className="flex h-[753px]">
            <main className="flex-1">
              <ReportPage />
            </main>
            <div className="flex w-[42px] shrink-0 flex-col items-center border-l border-[#b3b0ad] pt-[20px]">
              <PaneChevron />
              <svg width="15" height="16" viewBox="0 0 15 16" className="mt-[43px] ml-[4px] shrink-0" fill="none" stroke="#3b3a39" strokeWidth="1.200">
                <path d="M14.200 1v14L7.500 10H1V6.200h6.500z" />
              </svg>
              <Fit w={20} className="mt-[15px] h-[55px] text-[17.500px] leading-5 font-semibold tracking-[0.200px] text-[#252423] [writing-mode:vertical-rl]">Filters</Fit>
            </div>
          </div>
          <PageTabs />
        </div>
        <div className="flex border-l border-[#e1dfdd]">
          <Panes />
        </div>
      </div>
      <div className="flex h-[30px] shrink-0 border-t border-[#d9d8d6] bg-[#f3f2f1] pl-[6px] text-[14.500px] leading-[30px] text-[#494847]">
        <Fit w={74}>Page 1 of 2</Fit>
      </div>
      <Taskbar />
    </div>
  );
}
